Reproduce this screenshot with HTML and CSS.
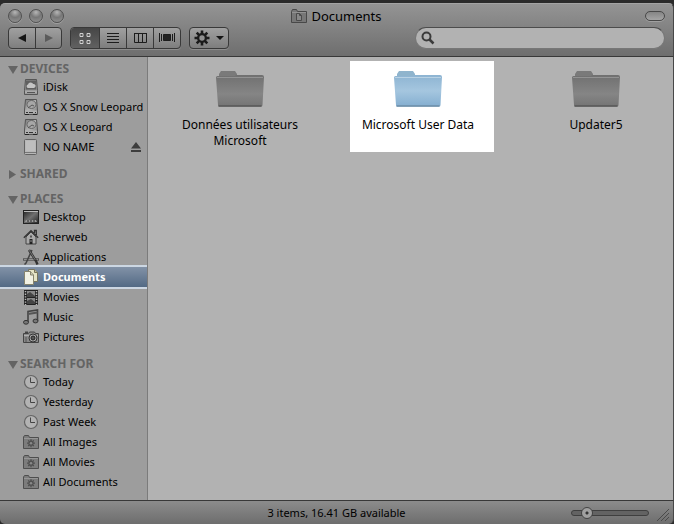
FILE: index.html
```html
<!DOCTYPE html>
<html lang="en">
<head>
<meta charset="utf-8">
<title>Documents</title>
<link rel="stylesheet" href="styles.css">
</head>
<body>
<svg class="defs" aria-hidden="true">
  <defs>
    <linearGradient id="gray" x1="0" y1="0" x2="0" y2="1"><stop offset="0" stop-color="#707070"/><stop offset=".6" stop-color="#858585"/><stop offset="1" stop-color="#747474"/></linearGradient>
    <linearGradient id="blue" x1="0" y1="0" x2="0" y2="1"><stop offset="0" stop-color="#8db4d2"/><stop offset=".5" stop-color="#a5c6df"/><stop offset="1" stop-color="#84aed0"/></linearGradient>
    <linearGradient id="metal" x1="0" y1="0" x2="1" y2="1"><stop offset="0" stop-color="#777"/><stop offset=".5" stop-color="#b4b4b4"/><stop offset="1" stop-color="#777"/></linearGradient>
    <linearGradient id="shade" x1="0" y1="0" x2="1" y2="1"><stop offset="0" stop-color="#222"/><stop offset=".5" stop-color="#707070"/><stop offset="1" stop-color="#222"/></linearGradient>
  </defs>
  <symbol id="gear" viewBox="0 0 16 16">
    <g stroke="currentColor" stroke-width="2.600"><path d="M8 .5v15M.5 8h15M2.700 2.700l10.600 10.600M13.300 2.700 2.700 13.300"/></g>
    <circle cx="8" cy="8" r="5" fill="currentColor"/><circle cx="8" cy="8" r="2.700" fill="#909090"/>
  </symbol>
  <symbol id="idisk" viewBox="0 0 16 16">
    <path d="M2.500.5h11l1 11v4h-13v-4z" fill="#8c8c8c" stroke="#555"/><path d="M3 1.500h10v9H3z" fill="#606060"/>
    <path d="M5 9a1.800 1.800 0 0 1 0-3.500 2.800 2.800 0 0 1 5.200-.5A2 2 0 0 1 11 9z" fill="#c4c4c4"/><path d="M2 11.500h12v3H2z" fill="#aaa"/><path d="M4 13.500h8" stroke="#555"/>
  </symbol>
  <symbol id="drive" viewBox="0 0 16 16">
    <path d="M2.500.5h11l1 10.500v4.500h-13V11z" fill="url(#metal)" stroke="#555"/><ellipse cx="8.500" cy="5.500" rx="4.500" ry="4" fill="#a7a7a7" stroke="#666"/>
    <path d="M5 9l4-3 2 1" fill="none" stroke="#555"/><path d="M2 11.500h12v3H2z" fill="#b0b0b0"/><path d="M3 13.500h2m1 0h4m2 0h1" stroke="#333"/><path d="M2 15.500h4m4 0h4" stroke="#222"/>
  </symbol>
  <symbol id="volume" viewBox="0 0 16 16">
    <rect x="1.500" y=".5" width="12" height="15" rx="1" fill="#b7b7b7" stroke="#626262"/><path d="M2 13.500h11" stroke="#777"/><path d="M3 2h9v10H3z" fill="#bebebe"/>
  </symbol>
  <symbol id="desktop" viewBox="0 0 16 16">
    <rect x=".5" y="1.500" width="15" height="13" fill="url(#shade)" stroke="#222"/><path d="M1 2.500h14" stroke="#bbb"/><path d="M2 13l1-2h10l1 2z" fill="#999"/><path d="M4 12h2m1 0h2m1 0h2" stroke="#222"/>
  </symbol>
  <symbol id="home" viewBox="0 0 16 16">
    <path d="M3 8v7h10V8L8 3z" fill="#aaa" stroke="#444"/><path d="M.8 8.800 8 1.700l7.200 7.100M11.500 4V1.500h1.800V6" fill="none" stroke="#333" stroke-width="1.300"/>
    <path d="M7 6.500h2v2H7z" fill="#555"/><path d="M6.500 10h3v5h-3z" fill="#222"/><circle cx="8" cy="12" r=".7" fill="#bbb"/>
  </symbol>
  <symbol id="apps" viewBox="0 0 16 16">
    <path d="M0 10.500h16" stroke="#555" stroke-width="2.500"/><path d="M1 10.500h14" stroke="#909090"/><path d="M9 1 3 14l-1.500 1.500" fill="none" stroke="#444" stroke-width="1.500"/>
    <path d="m6 1 7 11 1.500 3.500" fill="none" stroke="#333" stroke-width="2.400"/><path d="m6.300 1.300 6 9.700" stroke="#888" stroke-width=".8"/>
  </symbol>
  <symbol id="docs" viewBox="0 0 16 16">
    <path d="M5.500.5h6l3 3v9h-9z" fill="#e5e4c7" stroke="#77745d"/><path d="M11.500.5v3h3" fill="#bebb9a" stroke="#77745d"/>
    <path d="M1.500 2.500h6l3 3.500v9.500h-9z" fill="#f1f1e4" stroke="#86846e"/><path d="M7.500 2.500V6h3" fill="#c9c7ae" stroke="#86846e"/>
  </symbol>
  <symbol id="movies" viewBox="0 0 16 16">
    <path d="M1 1h14v15H1z" fill="#222"/><path d="M4 2h8v6H4zM4 9h8v6H4z" fill="#888"/><path d="m4 5 3-2 5 4v1H4zM4 12l4-2 4 3v2H4z" fill="#444"/>
    <path d="M2.500 2v14M13.500 2v14" stroke="#b8b8b8" stroke-width="1.500" stroke-dasharray="1.300 1.300"/>
  </symbol>
  <symbol id="music" viewBox="0 0 16 16">
    <path d="M5 13V2.500L14.500 1v11" fill="none" stroke="#444" stroke-width="1.600"/><path d="M5 5l9.500-1.500" stroke="#555" stroke-width="2"/>
    <ellipse cx="3" cy="13.300" rx="2.500" ry="1.900" fill="#777" stroke="#333"/><ellipse cx="12.500" cy="12" rx="2.500" ry="1.900" fill="#777" stroke="#333"/>
  </symbol>
  <symbol id="pictures" viewBox="0 0 16 16">
    <path d="M.5 4.500h5L6.500 3h5l1 1.500h3v9H.5z" fill="#898989" stroke="#444"/><path d="M1 6.500h14" stroke="#b0b0b0"/><path d="M2 2.500h3V4H2z" fill="#444"/>
    <circle cx="10" cy="9" r="4" fill="#aaa" stroke="#333"/><circle cx="10" cy="9" r="2" fill="#555" stroke="#222"/><path d="M3 8v5" stroke="#555"/>
  </symbol>
  <symbol id="clock" viewBox="0 0 16 16">
    <circle cx="8" cy="8" r="6.500" fill="#b3b3b3" stroke="#646464" stroke-width="1.200"/><path d="M7.500 3.500v5H12" fill="none" stroke="#444"/>
  </symbol>
  <symbol id="smart" viewBox="0 0 16 16">
    <path d="M.5 14.500V3L1.500 1.500h4L6.500 3.500h9v11z" fill="#7c7c7c" stroke="#4e4e4e"/><path d="M1 4.500h14" stroke="#969696"/>
    <path d="M8 5.200v8M4 9.200h8M5.200 6.400l5.600 5.600M10.800 6.400 5.200 12" stroke="#505050" stroke-width="1.300"/><circle cx="8" cy="9.200" r="2.600" fill="#505050"/><circle cx="8" cy="9.200" r="1.300" fill="#888"/>
  </symbol>
  <symbol id="folder-gray" viewBox="0 0 50 38">
    <path d="M4 8V4l2-3h14l2 3v2h23v6H4z" fill="#7a7a7a"/><path d="M1 7.500q0-1.500 1.500-1.500H20l1-1h26q2 0 2 2L47.500 35q0 1.500-1.500 1.500H4.500Q3 36.500 3 35z" fill="url(#gray)"/><path d="M2 7.500h46" stroke="#929292"/><path d="M3.500 36h43" stroke="#575757" stroke-width="1.500"/>
  </symbol>
  <symbol id="folder-blue" viewBox="0 0 50 38">
    <path d="M4 8V4l2-3h14l2 3v2h23v6H4z" fill="#8fb4cd"/><path d="M1 7.500q0-1.500 1.500-1.500H20l1-1h26q2 0 2 2L47.500 35q0 1.500-1.500 1.500H4.500Q3 36.500 3 35z" fill="url(#blue)"/><path d="M2 7.500h46" stroke="#b9d2e4"/><path d="M3.500 36h43" stroke="#6b8da6" stroke-width="1.500"/>
  </symbol>
</svg>

<div class="window">
  <header class="chrome">
    <div class="titlebar">
      <div class="lights">
        <button class="light" aria-label="Close"></button>
        <button class="light" aria-label="Minimize"></button>
        <button class="light" aria-label="Zoom"></button>
      </div>
      <h1 class="title">
        <svg width="16" height="14" viewBox="0 0 16 14"><path d="M.5 13.500v-11l1-2h4l1 2h9v11z" fill="#777" stroke="#484848"/><path d="M1 3.500h14" stroke="#929292"/><path d="M5.500 4.500h3l2 2v5h-5zM8.500 4.500v2h2" fill="#888" stroke="#4a4a4a"/></svg>
        Documents
      </h1>
      <button class="pill" aria-label="Toggle toolbar"></button>
    </div>
    <div class="toolbar">
      <div class="group nav">
        <button class="tool" aria-label="Back"><svg width="10" height="10"><path d="M9 1v8L1 5z" fill="#151515"/></svg></button>
        <button class="tool" aria-label="Forward"><svg width="10" height="10"><path d="M1 1v8l8-4z" fill="#5b5b5b"/></svg></button>
      </div>
      <div class="group views">
        <button class="tool active" aria-label="Icon view"><svg width="12" height="12" fill="#555" stroke="#d0d0d0"><path d="M1 1.500h3v3H1zM8 1.500h3v3H8zM1 8.500h3v3H1zM8 8.500h3v3H8z"/></svg></button>
        <button class="tool" aria-label="List view"><svg width="12" height="12" stroke="#1c1c1c"><path d="M0 1.500h12M0 4.500h12M0 7.500h12M0 10.500h12"/></svg></button>
        <button class="tool" aria-label="Column view"><svg width="13" height="12" fill="none" stroke="#1c1c1c"><path d="M.5 1.500h12v9H.5zM4.500 1v9M8.500 1v9M0 1.500h13"/></svg></button>
        <button class="tool" aria-label="Cover Flow view"><svg width="16" height="12" stroke="#1c1c1c"><path d="M.5 1v9M2.500 2v7M13.500 2v7M15.500 1v9"/><path d="M4.500 2.500h7v6h-7z" fill="#222"/></svg></button>
      </div>
      <div class="group">
        <button class="tool action" aria-label="Action"><svg width="16" height="16" color="#1b1b1b"><use href="#gear"/></svg><svg width="8" height="5"><path d="M0 0h8L4 4z" fill="#151515"/></svg></button>
      </div>
      <label class="search">
        <svg width="14" height="14" fill="none" stroke="#3b3b3b"><circle cx="5.500" cy="5.500" r="4" stroke-width="2"/><path d="m8.500 8.500 4 4" stroke-width="2.500"/></svg>
        <input type="search" aria-label="Search">
      </label>
    </div>
  </header>

  <div class="body">
    <nav class="sidebar">
      <section class="section">
        <h2 class="heading"><svg width="10" height="9"><path d="M0 1h10L5 9z"/></svg>DEVICES</h2>
        <a class="item" href="#"><svg class="icon"><use href="#idisk"/></svg>iDisk</a>
        <a class="item" href="#"><svg class="icon"><use href="#drive"/></svg>OS X Snow Leopard</a>
        <a class="item" href="#"><svg class="icon"><use href="#drive"/></svg>OS X Leopard</a>
        <div class="item"><svg class="icon"><use href="#volume"/></svg>NO NAME
          <button class="eject" aria-label="Eject"><svg width="10" height="10"><path d="M0 6.500h10L5 0zM0 8h10v2H0z" fill="#3d3d3d"/></svg></button></div>
      </section>
      <section class="section">
        <h2 class="heading"><svg width="10" height="9"><path d="M1 0v9l7-4.500z"/></svg>SHARED</h2>
      </section>
      <section class="section">
        <h2 class="heading"><svg width="10" height="9"><path d="M0 1h10L5 9z"/></svg>PLACES</h2>
        <a class="item" href="#"><svg class="icon"><use href="#desktop"/></svg>Desktop</a>
        <a class="item" href="#"><svg class="icon"><use href="#home"/></svg>sherweb</a>
        <a class="item" href="#"><svg class="icon"><use href="#apps"/></svg>Applications</a>
        <a class="item selected" href="#" aria-current="page"><svg class="icon"><use href="#docs"/></svg>Documents</a>
        <a class="item" href="#"><svg class="icon"><use href="#movies"/></svg>Movies</a>
        <a class="item" href="#"><svg class="icon"><use href="#music"/></svg>Music</a>
        <a class="item" href="#"><svg class="icon"><use href="#pictures"/></svg>Pictures</a>
      </section>
      <section class="section">
        <h2 class="heading"><svg width="10" height="9"><path d="M0 1h10L5 9z"/></svg>SEARCH FOR</h2>
        <a class="item" href="#"><svg class="icon"><use href="#clock"/></svg>Today</a>
        <a class="item" href="#"><svg class="icon"><use href="#clock"/></svg>Yesterday</a>
        <a class="item" href="#"><svg class="icon"><use href="#clock"/></svg>Past Week</a>
        <a class="item" href="#"><svg class="icon"><use href="#smart"/></svg>All Images</a>
        <a class="item" href="#"><svg class="icon"><use href="#smart"/></svg>All Movies</a>
        <a class="item" href="#"><svg class="icon"><use href="#smart"/></svg>All Documents</a>
      </section>
    </nav>
    <main class="files">
      <a class="file" href="#"><svg class="folder"><use href="#folder-gray"/></svg>Données utilisateurs Microsoft</a>
      <a class="file highlight" href="#"><svg class="folder"><use href="#folder-blue"/></svg>Microsoft User Data</a>
      <a class="file" href="#"><svg class="folder"><use href="#folder-gray"/></svg>Updater5</a>
    </main>
  </div>

  <footer class="status">
    <p class="summary">3 items, 16.41 GB available</p>
    <input class="zoom" type="range" min="0" max="100" value="14" aria-label="Icon size">
    <svg class="grip" width="12" height="12" stroke="#4a4a4a"><path d="M0 12 12 0M4 12l8-8M8 12l4-4"/></svg>
  </footer>
</div>
</body>
</html>
```
FILE: styles.css
```css
* { box-sizing: border-box; }

body {
  margin: 0;
  background: #2b2b2b;
  color: #000;
  font-family: "Noto Sans", "Open Sans", sans-serif;
  font-size: 12px;
}

a { color: inherit; text-decoration: none; }
button { margin: 0; padding: 0; border: 0; background: none; font: inherit; }
svg { flex: none; }
.defs { position: absolute; width: 0; height: 0; }

.window {
  display: flex;
  flex-direction: column;
  min-height: 100vh;
  padding-top: 3px;
}

.chrome {
  padding: 5px 8px 7px;
  border-top: 1px solid #a4a4a4;
  border-right: 1px solid #484848;
  border-bottom: 1px solid #383838;
  border-radius: 5px 5px 0 0;
  background: linear-gradient(#949494, #6e6e6e);
}

.titlebar {
  display: grid;
  grid-template-columns: 1fr auto 1fr;
  align-items: center;
  height: 13px;
  margin-bottom: 5px;
}

.lights { display: flex; align-items: center; gap: 7px; height: 10px; }
.light {
  width: 14px;
  height: 14px;
  border: 1px solid #505050;
  border-radius: 50%;
  background: radial-gradient(circle at 50% 20%, #b5b5b5, #777 45%, #979797);
  box-shadow: 0 1px 0 #a0a0a0;
}

.title {
  display: flex;
  align-items: center;
  gap: 4px;
  margin: 0;
  font-size: 13px;
  font-weight: 400;
  line-height: 14px;
}

.pill {
  justify-self: end;
  width: 20px;
  height: 10px;
  border: 1px solid #484848;
  border-radius: 5px;
  background: linear-gradient(#858585, #a4a4a4);
  box-shadow: 0 1px 0 #a0a0a0;
}

.toolbar { display: flex; gap: 8px; }

.group {
  display: flex;
  height: 22px;
  border: 1px solid #393939;
  border-radius: 4px;
  background: linear-gradient(#a0a0a0, #7e7e7e);
  box-shadow: 0 1px 0 #8c8c8c;
  overflow: hidden;
}

.tool {
  display: flex;
  align-items: center;
  justify-content: center;
  gap: 6px;
  width: 26px;
}
.views .tool { width: 27px; }
.tool + .tool { border-left: 1px solid #393939; }
.views .active { width: 28px; background: linear-gradient(#464646, #616161); }
.group .action { width: 38px; }

.search {
  display: flex;
  align-items: center;
  flex: 0 1 250px;
  height: 22px;
  margin-left: auto;
  padding: 0 5px;
  border: 1px solid #777;
  border-top-color: #4c4c4c;
  border-radius: 11px;
  background: #b2b2b2;
}
.search input {
  flex: 1;
  min-width: 0;
  border: 0;
  outline: 0;
  background: none;
  font: inherit;
}

.body { display: flex; flex: 1; }

.sidebar {
  flex: none;
  width: 148px;
  padding: 4px 0 8px;
  border-right: 1px solid #7b7b7b;
  background: #9d9d9d;
}

.section + .section { margin-top: 9px; }

.heading {
  display: flex;
  align-items: center;
  gap: 2px;
  margin: 0;
  padding-left: 8px;
  color: #646464;
  fill: #646464;
  font-size: 12px;
  font-weight: 700;
  line-height: 16px;
}

.item {
  display: flex;
  align-items: center;
  gap: 4px;
  height: 20px;
  padding: 0 6px 0 23px;
  font-size: 11px;
  line-height: 20px;
  white-space: nowrap;
}
.selected {
  background: linear-gradient(#8292a7, #536a85);
  box-shadow: 0 -2px 0 #ccd7e3, 0 2px 0 #ccd7e3;
  color: #fff;
  font-weight: 700;
}
.icon { width: 16px; height: 16px; }
.eject { display: flex; margin-left: auto; }

.files {
  display: flex;
  flex: 1;
  flex-wrap: wrap;
  align-content: flex-start;
  align-items: flex-start;
  gap: 42px;
  padding: 4px 8px 8px 24px;
  border-right: 1px solid #484848;
  background: #b2b2b2;
}

.file {
  display: flex;
  flex-direction: column;
  align-items: center;
  gap: 9px;
  width: 136px;
  padding-top: 9px;
  font-size: 12px;
  line-height: 16px;
  text-align: center;
}
.highlight {
  width: 144px;
  min-height: 91px;
  margin-right: -8px;
  padding-right: 8px;
  background: #fff;
}
.folder { width: 50px; height: 38px; }

.status {
  display: grid;
  grid-template-columns: 1fr auto 1fr auto;
  align-items: center;
  height: 24px;
  padding-right: 4px;
  border-top: 1px solid #383838;
  border-right: 1px solid #484848;
  border-radius: 0 0 5px 5px;
  background: linear-gradient(#8c8c8c, #6d6d6d);
}
.summary { grid-column: 2; margin: 0; padding-left: 16px; font-size: 11px; }
.grip { align-self: end; margin-bottom: 3px; }

.zoom {
  justify-self: end;
  width: 78px;
  height: 12px;
  margin: 0 8px 0 0;
  appearance: none;
  background: none;
}
.zoom::-webkit-slider-runnable-track {
  height: 6px;
  border: 1px solid #3f3f3f;
  border-radius: 3px;
  background: #636363;
}
.zoom::-webkit-slider-thumb {
  appearance: none;
  width: 12px;
  height: 12px;
  margin-top: -4px;
  border: 1px solid #444;
  border-radius: 50%;
  background: radial-gradient(circle, #333 1px, #a0a0a0 2px);
}
```
